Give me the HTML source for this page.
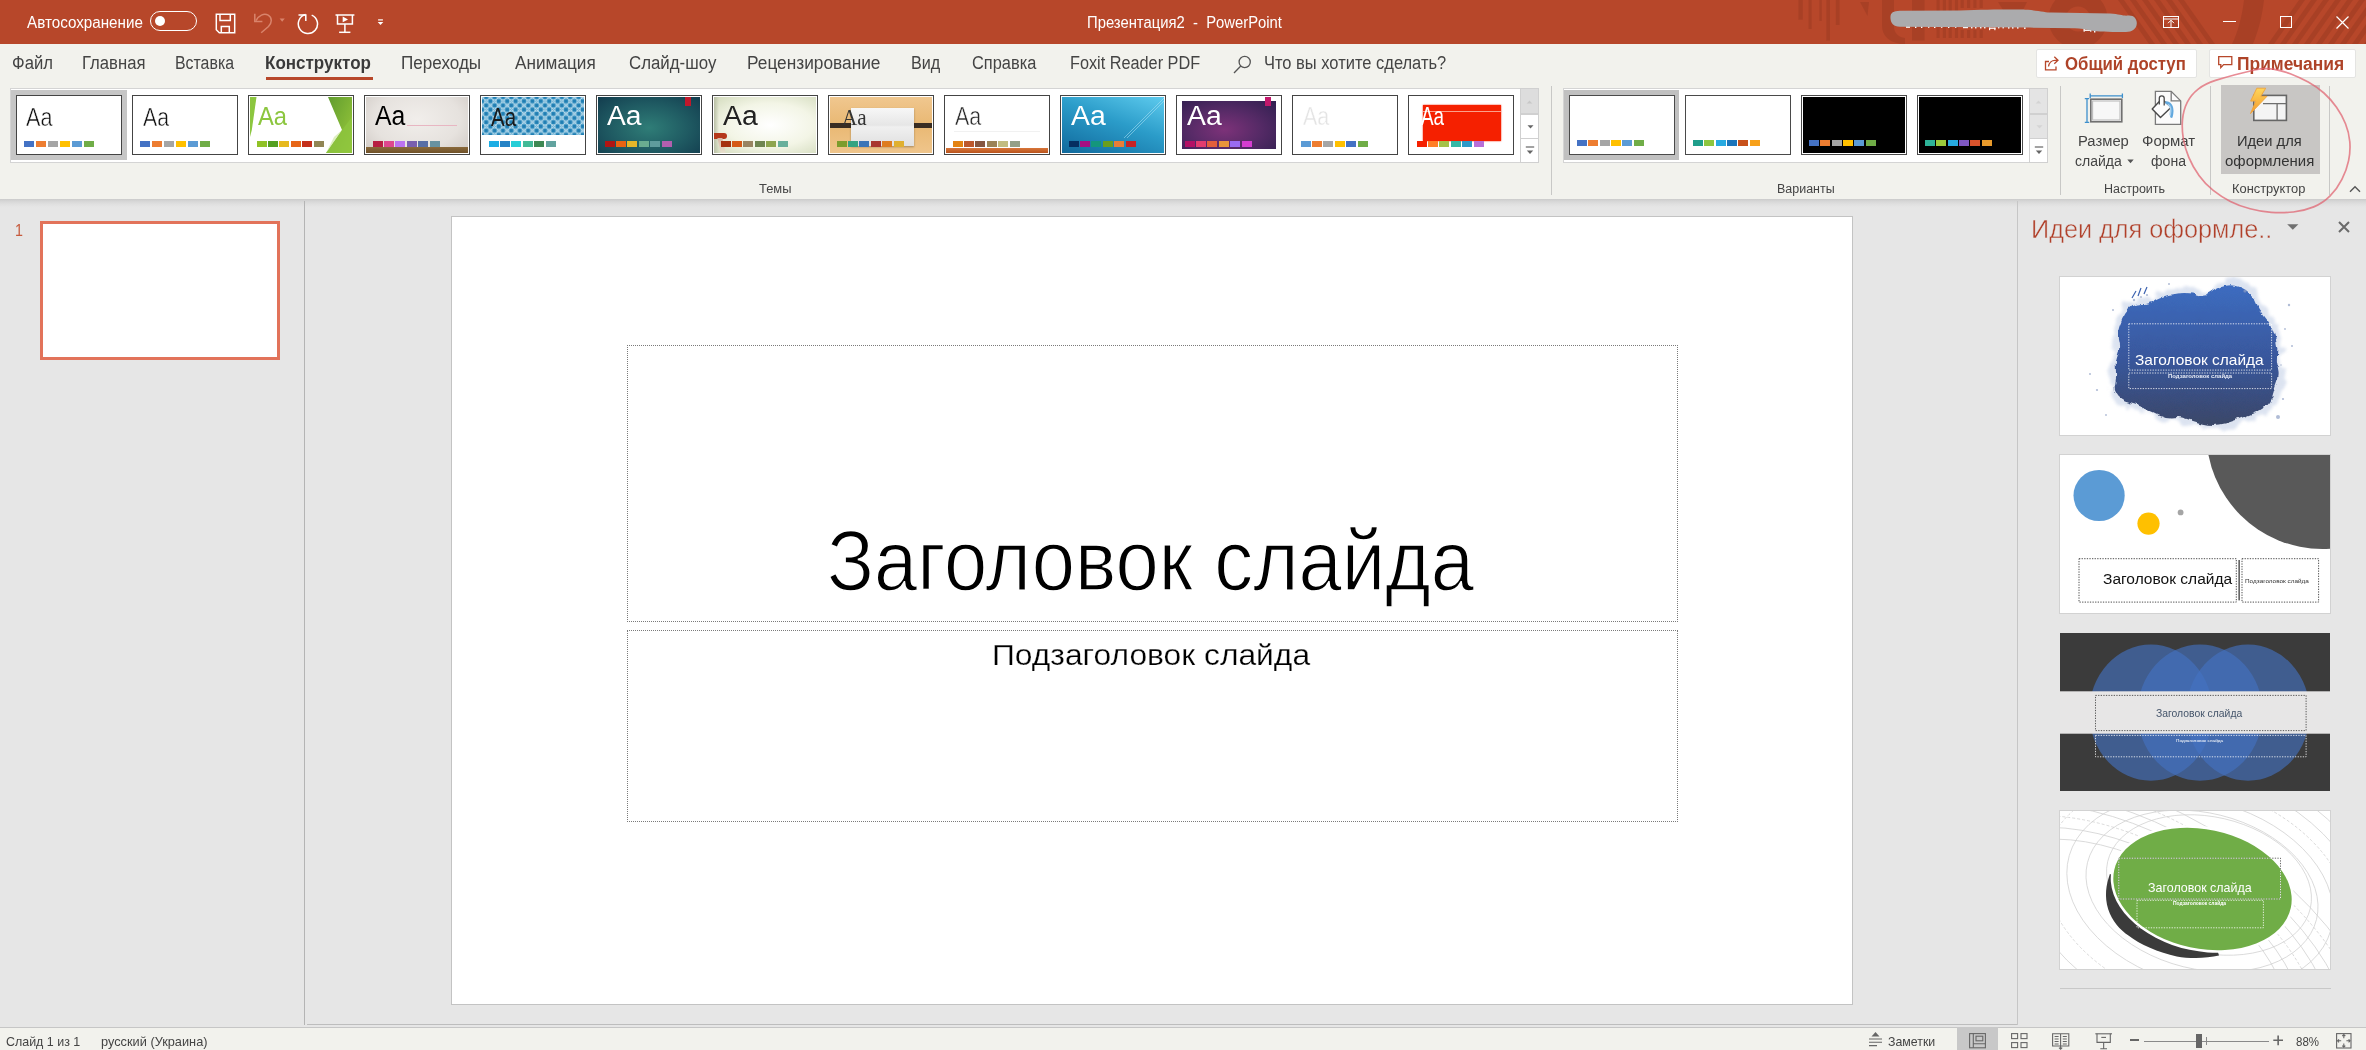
<!DOCTYPE html>
<html lang="ru"><head><meta charset="utf-8"><title>PowerPoint</title>
<style>
html,body{margin:0;padding:0;}
body{width:2366px;height:1050px;overflow:hidden;background:#E6E6E6;font-family:"Liberation Sans",sans-serif;position:relative;}
div,svg{box-sizing:border-box;}

</style></head><body>
<div style="position:absolute;left:0px;top:0px;width:2366px;height:44px;background:#B7472A;"></div>
<div style="position:absolute;left:0px;top:44px;width:2366px;height:155px;background:#F2F2ED;"></div>
<div style="position:absolute;left:0px;top:199px;width:2366px;height:9px;background:linear-gradient(to bottom,#cbcbcb 0%,#d6d6d6 25%,#dfdfdf 55%,#e4e4e4 80%,#e6e6e6 100%);"></div>
<div style="position:absolute;left:0px;top:1027px;width:2366px;height:23px;background:#F2F2ED;border-top:1px solid #c6c6c6;"></div>
<svg style="position:absolute;left:0px;top:0px;" width="2366" height="44" viewBox="0 0 2366 44"><g fill="#A53F25" opacity="0.8"><rect x="1798.4" y="0" width="4.4" height="19.7"/><rect x="1808.5" y="0" width="3.2" height="29"/><rect x="1819.3" y="0" width="2.5" height="21"/><rect x="1826.3" y="0" width="3.7" height="40.6"/><rect x="1835.8" y="0" width="3.8" height="25"/><path d="M1860 2 H1869 L1867.5 16 Z"/><path d="M1882 0 H1894 V26 C1894 33 1898 37 1905 38 L1905 44 C1890 44 1882 36 1882 26 Z"/><rect x="1912" y="0" width="12.6" height="40.6"/><rect x="1936.5" y="0" width="3.2" height="38"/><rect x="1942.8" y="0" width="3.2" height="38"/><rect x="1948.6" y="0" width="3.2" height="38"/><rect x="1954.9" y="0" width="3.2" height="38"/><rect x="1960.6" y="0" width="3.2" height="8"/><rect x="1960.6" y="30" width="3.2" height="8"/><rect x="1967" y="0" width="3.2" height="8"/><rect x="1967" y="30" width="3.2" height="8"/><rect x="1973.3" y="0" width="3.2" height="8"/><rect x="1973.3" y="30" width="3.2" height="8"/><rect x="1979.6" y="0" width="3.2" height="8"/><rect x="1979.6" y="30" width="3.2" height="8"/><path d="M1998 2 H2027 L2023 10 H2003 Z"/><circle cx="2078" cy="19" r="21" fill="none" stroke="#A53F25" stroke-width="17"/><path d="M2118 0 h6 l31 44 h-6 z"/><path d="M2130 0 h6 l31 44 h-6 z"/><path d="M2142 0 h6 l31 44 h-6 z"/><path d="M2154 0 h6 l31 44 h-6 z"/><path d="M2166 0 h6 l31 44 h-6 z"/><path d="M2178 0 h6 l31 44 h-6 z"/><path d="M2244 0 H2264 C2262 18 2258 32 2253 44 H2232 C2238 32 2242 16 2244 0 Z"/><path d="M2268 44 h6 l31 -44 h-6 z"/><path d="M2280 44 h6 l31 -44 h-6 z"/><path d="M2292 44 h6 l31 -44 h-6 z"/><path d="M2304 44 h6 l31 -44 h-6 z"/><path d="M2316 44 h6 l31 -44 h-6 z"/><path d="M2328 44 h6 l31 -44 h-6 z"/><path d="M2340 44 h6 l31 -44 h-6 z"/><path d="M2352 44 h6 l31 -44 h-6 z"/><path d="M2364 44 h6 l31 -44 h-6 z"/><path d="M2376 44 h6 l31 -44 h-6 z"/></g></svg>
<div style="position:absolute;left:27.00px;top:11.50px;white-space:pre;font:400 16px/21px 'Liberation Sans',sans-serif;color:#fff;transform:scaleX(0.9503);transform-origin:0 0;">Автосохранение</div>
<div style="position:absolute;left:150px;top:11px;width:47px;height:20px;border:1.5px solid #fff;border-radius:10px;"></div>
<div style="position:absolute;left:155px;top:16px;width:10px;height:10px;background:#fff;border-radius:5px;"></div>
<svg style="position:absolute;left:215px;top:13px;" width="21" height="21" viewBox="0 0 21 21"><g fill="none" stroke="#fff" stroke-width="1.5"><path d="M1.3 1.3 H19.7 V19.7 H4.3 L1.3 16.7 Z"/><path d="M5 1.3 V7.6 H15.3 V1.3"/><path d="M6.3 19.7 V13.4 H14.3 V19.7"/></g></svg>
<svg style="position:absolute;left:252px;top:12px;" width="34" height="24" viewBox="0 0 34 24"><g fill="none" stroke="#D9846C" stroke-width="1.5"><path d="M2.8 1.8 V9.5 H10.4"/><path d="M4 8.6 C6.5 3.5 12 0.8 16.2 3.2 C20.5 5.8 20 11 16.5 14.5 L9.2 20.8"/></g><path d="M27.6 6.6 h5.2 l-2.6 3.1z" fill="#D9846C"/></svg>
<svg style="position:absolute;left:297px;top:13px;" width="22" height="22" viewBox="0 0 22 22"><g fill="none" stroke="#fff" stroke-width="1.5"><path d="M14.7 2.1 A9.6 9.6 0 1 1 8.6 1.6"/><path d="M1.5 1.9 H8.8 V8"/></g></svg>
<svg style="position:absolute;left:335px;top:14px;" width="20" height="20" viewBox="0 0 20 20"><g fill="none" stroke="#fff" stroke-width="1.5"><path d="M0.5 1 H19.4"/><path d="M2.5 1 V9.9 H17.4 V1"/><path d="M9.9 9.9 V18.3"/><path d="M4.1 18.3 H15.4"/></g><path d="M7.7 2.6 L13 5.5 L7.7 8.3Z" fill="#fff"/></svg>
<svg style="position:absolute;left:377px;top:18px;" width="8" height="9" viewBox="0 0 8 9"><path d="M1.1 1.9 H5.9" stroke="#fff" stroke-width="1.2"/><path d="M0.7 3.9 H6.3 L3.5 6.9Z" fill="#fff"/></svg>
<div style="position:absolute;left:1086.57px;top:11.50px;white-space:pre;font:400 16px/21px 'Liberation Sans',sans-serif;color:#fff;transform:scaleX(0.9261);transform-origin:0 0;">Презентация2  -  PowerPoint</div>
<svg style="position:absolute;left:0px;top:0px;" width="2366" height="44" viewBox="0 0 2366 44"><g fill="#fff"><rect x="1906" y="26" width="4" height="1.8"/><rect x="1915" y="26" width="1.4" height="2"/><rect x="1921" y="26" width="1.4" height="2"/><rect x="1928" y="26" width="1.4" height="1.8"/><rect x="1934" y="26" width="1.4" height="2"/><rect x="1941" y="26" width="1.4" height="1.8"/><rect x="1948" y="26" width="1.4" height="2"/><rect x="1955" y="26" width="1.4" height="1.8"/><rect x="1963" y="26" width="5" height="2.2"/><rect x="1971" y="26" width="1.5" height="2.4"/><rect x="1975" y="26" width="1.5" height="2.4"/><rect x="1980" y="26" width="1.5" height="2.4"/><rect x="1984" y="26" width="1.5" height="2.4"/><rect x="1989" y="27.6" width="6.5" height="1.2"/><rect x="1989" y="27.6" width="1.2" height="2.6"/><rect x="1994.3" y="27.6" width="1.2" height="2.6"/><rect x="1998" y="26" width="1.4" height="2.4"/><rect x="2002.5" y="26" width="1.4" height="2.4"/><rect x="2008" y="26" width="1.5" height="2.6"/><rect x="2012" y="26" width="1.5" height="2.6"/><rect x="2017" y="26" width="1.5" height="2.6"/><rect x="2024" y="27.3" width="1.6" height="1.6"/><rect x="2083.5" y="27" width="1.4" height="4.6"/><rect x="2085" y="29.6" width="6" height="1.3"/><rect x="2090" y="27" width="1.4" height="4.6"/><rect x="2094" y="29.5" width="1.4" height="3"/></g><path d="M1890.5 18.5 C1890 13 1893 11 1900 10.8 L1960 10.5 C1990 9.4 2020 9.4 2028 9.8 C2040 10.8 2046 12.6 2052 12.6 L2110 13.5 C2120 14 2123 16.2 2128 15.6 C2134 15 2137 19 2136.8 23.5 C2136.5 29 2132 32 2126 32 C2115 32 2100 31.8 2094 31 C2086 29.5 2080 28.5 2075 28.3 L2030 27.6 L1900 26.8 C1893 26.5 1891 23 1890.5 18.5 Z" fill="#ABABAD"/></svg>
<svg style="position:absolute;left:2163px;top:16px;" width="16" height="12" viewBox="0 0 16 12"><g fill="none" stroke="#fff" stroke-width="1"><rect x="0.5" y="0.5" width="15" height="11"/><path d="M0.5 3 H15.5"/><path d="M8 11 V4.4 M5 7.2 L8 4.2 L11 7.2"/></g></svg>
<div style="position:absolute;left:2223px;top:20.7px;width:12.5px;height:1.2px;background:#fff;"></div>
<div style="position:absolute;left:2280px;top:16px;width:12px;height:12px;border:1.2px solid #fff;"></div>
<svg style="position:absolute;left:2336px;top:16px;" width="13" height="13" viewBox="0 0 13 13"><path d="M0.5 0.5 L12.5 12.5 M12.5 0.5 L0.5 12.5" stroke="#fff" stroke-width="1.2" fill="none"/></svg>
<div style="position:absolute;left:12.08px;top:51.30px;white-space:pre;font:400 18px/24px 'Liberation Sans',sans-serif;color:#444444;transform:scaleX(0.9240);transform-origin:0 0;">Файл</div>
<div style="position:absolute;left:81.57px;top:51.30px;white-space:pre;font:400 18px/24px 'Liberation Sans',sans-serif;color:#444444;transform:scaleX(0.9257);transform-origin:0 0;">Главная</div>
<div style="position:absolute;left:175.42px;top:51.30px;white-space:pre;font:400 18px/24px 'Liberation Sans',sans-serif;color:#444444;transform:scaleX(0.8820);transform-origin:0 0;">Вставка</div>
<div style="position:absolute;left:401.05px;top:51.30px;white-space:pre;font:400 18px/24px 'Liberation Sans',sans-serif;color:#444444;transform:scaleX(0.9492);transform-origin:0 0;">Переходы</div>
<div style="position:absolute;left:515.00px;top:51.30px;white-space:pre;font:400 18px/24px 'Liberation Sans',sans-serif;color:#444444;transform:scaleX(0.9552);transform-origin:0 0;">Анимация</div>
<div style="position:absolute;left:629.00px;top:51.30px;white-space:pre;font:400 18px/24px 'Liberation Sans',sans-serif;color:#444444;transform:scaleX(0.9356);transform-origin:0 0;">Слайд-шоу</div>
<div style="position:absolute;left:747.04px;top:51.30px;white-space:pre;font:400 18px/24px 'Liberation Sans',sans-serif;color:#444444;transform:scaleX(0.9603);transform-origin:0 0;">Рецензирование</div>
<div style="position:absolute;left:911.10px;top:51.30px;white-space:pre;font:400 18px/24px 'Liberation Sans',sans-serif;color:#444444;transform:scaleX(0.8983);transform-origin:0 0;">Вид</div>
<div style="position:absolute;left:971.80px;top:51.30px;white-space:pre;font:400 18px/24px 'Liberation Sans',sans-serif;color:#444444;transform:scaleX(0.9106);transform-origin:0 0;">Справка</div>
<div style="position:absolute;left:1069.90px;top:51.30px;white-space:pre;font:400 18px/24px 'Liberation Sans',sans-serif;color:#444444;transform:scaleX(0.9032);transform-origin:0 0;">Foxit Reader PDF</div>
<div style="position:absolute;left:265.35px;top:51.30px;white-space:pre;font:700 18px/24px 'Liberation Sans',sans-serif;color:#3a3a3a;transform:scaleX(0.9457);transform-origin:0 0;">Конструктор</div>
<div style="position:absolute;left:265.8px;top:76.5px;width:106.8px;height:3px;background:#B7472A;"></div>
<svg style="position:absolute;left:1233px;top:55px;" width="19" height="19" viewBox="0 0 19 19"><g fill="none" stroke="#555" stroke-width="1.3"><circle cx="11.7" cy="7" r="5.6"/><path d="M7.8 11 L1 18"/></g></svg>
<div style="position:absolute;left:1263.58px;top:51.30px;white-space:pre;font:400 18px/24px 'Liberation Sans',sans-serif;color:#444444;transform:scaleX(0.9158);transform-origin:0 0;">Что вы хотите сделать?</div>
<div style="position:absolute;left:2036px;top:48.5px;width:161px;height:29px;background:#fff;border:1px solid #e4e4e2;border-radius:2px;"></div>
<div style="position:absolute;left:2208.5px;top:48.5px;width:147px;height:29px;background:#fff;border:1px solid #e4e4e2;border-radius:2px;"></div>
<svg style="position:absolute;left:2044px;top:55px;" width="16" height="16" viewBox="0 0 16 16"><g fill="none" stroke="#B7472A" stroke-width="1.3"><path d="M5 6.5 H1.5 V14.8 H12 V11.5"/><path d="M4.5 11.5 C5 7.5 8 5.3 11 5.3 H13.5 M10.3 1.8 L14 5.3 L10.3 8.8"/></g></svg>
<div style="position:absolute;left:2065.30px;top:51.60px;white-space:pre;font:700 18px/24px 'Liberation Sans',sans-serif;color:#AE4328;transform:scaleX(0.9309);transform-origin:0 0;">Общий доступ</div>
<svg style="position:absolute;left:2218px;top:55.5px;" width="15" height="13" viewBox="0 0 15 13"><path d="M0.7 0.7 H13.8 V8.6 H5.6 L2.8 11.6 V8.6 H0.7 Z" fill="none" stroke="#B7472A" stroke-width="1.3"/></svg>
<div style="position:absolute;left:2237.33px;top:51.60px;white-space:pre;font:700 18px/24px 'Liberation Sans',sans-serif;color:#AE4328;transform:scaleX(0.9673);transform-origin:0 0;">Примечания</div>
<div style="position:absolute;left:10px;top:88px;width:1528.5px;height:74.5px;background:#fff;border:1px solid #d4d4d4;"></div>
<div style="position:absolute;left:11.3px;top:90px;width:115.5px;height:69.5px;background:#c6c6c6;"></div>
<div style="position:absolute;left:16px;top:95px;width:106px;height:60px;border:1px solid #444;background:#fff;overflow:hidden;"><div style="position:absolute;left:1px;top:1px;width:102px;height:56px;overflow:hidden;"><div style="position:absolute;left:6.0px;top:43.5px;width:10px;height:6px;background:#4472C4"></div><div style="position:absolute;left:18.0px;top:43.5px;width:10px;height:6px;background:#ED7D31"></div><div style="position:absolute;left:30.0px;top:43.5px;width:10px;height:6px;background:#A5A5A5"></div><div style="position:absolute;left:42.0px;top:43.5px;width:10px;height:6px;background:#FFC000"></div><div style="position:absolute;left:54.0px;top:43.5px;width:10px;height:6px;background:#5B9BD5"></div><div style="position:absolute;left:66.0px;top:43.5px;width:10px;height:6px;background:#70AD47"></div></div></div>
<div style="position:absolute;left:132px;top:95px;width:106px;height:60px;border:1px solid #444;background:#fff;overflow:hidden;"><div style="position:absolute;left:1px;top:1px;width:102px;height:56px;overflow:hidden;"><div style="position:absolute;left:6.0px;top:43.5px;width:10px;height:6px;background:#4472C4"></div><div style="position:absolute;left:18.0px;top:43.5px;width:10px;height:6px;background:#ED7D31"></div><div style="position:absolute;left:30.0px;top:43.5px;width:10px;height:6px;background:#A5A5A5"></div><div style="position:absolute;left:42.0px;top:43.5px;width:10px;height:6px;background:#FFC000"></div><div style="position:absolute;left:54.0px;top:43.5px;width:10px;height:6px;background:#5B9BD5"></div><div style="position:absolute;left:66.0px;top:43.5px;width:10px;height:6px;background:#70AD47"></div></div></div>
<div style="position:absolute;left:248px;top:95px;width:106px;height:60px;border:1px solid #444;background:#fff;overflow:hidden;"><div style="position:absolute;left:1px;top:1px;width:102px;height:56px;overflow:hidden;"><svg style="position:absolute;left:0;top:0" width="102" height="56"><defs><linearGradient id="fg" x1="0" y1="0" x2="1" y2="1"><stop offset="0" stop-color="#5E9A2E"/><stop offset="1" stop-color="#9CCB3B"/></linearGradient></defs><path d="M0 0 H6.5 L1.8 33 L0 40Z" fill="#8CC63F"/><path d="M78 0 H102 V56 H76 L92 33Z" fill="url(#fg)"/><path d="M92 33 L102 20 V56 H76Z" fill="#8DC63F" opacity="0.75"/><path d="M84 40 L92 33 L76 56Z" fill="#D6EBB0" opacity="0.8"/></svg><div style="position:absolute;left:6.5px;top:43.5px;width:10px;height:6px;background:#90C226"></div><div style="position:absolute;left:17.9px;top:43.5px;width:10px;height:6px;background:#54A021"></div><div style="position:absolute;left:29.3px;top:43.5px;width:10px;height:6px;background:#E6B91E"></div><div style="position:absolute;left:40.7px;top:43.5px;width:10px;height:6px;background:#E76618"></div><div style="position:absolute;left:52.1px;top:43.5px;width:10px;height:6px;background:#C42F1A"></div><div style="position:absolute;left:63.5px;top:43.5px;width:10px;height:6px;background:#918655"></div></div></div>
<div style="position:absolute;left:364px;top:95px;width:106px;height:60px;border:1px solid #444;background:#fff;overflow:hidden;"><div style="position:absolute;left:1px;top:1px;width:102px;height:56px;overflow:hidden;"><div style="position:absolute;left:0;top:0;width:102px;height:56px;background:radial-gradient(ellipse at 50% 40%,#f1eeeb 0%,#e6e2de 60%,#cfc9c4 100%)"></div><div style="position:absolute;left:0;top:50px;width:102px;height:6px;background:linear-gradient(#8a6a3c,#6f5128)"></div><div style="position:absolute;left:41px;top:27.7px;width:50px;height:1px;background:#e8b6c2"></div><div style="position:absolute;left:6.5px;top:43.5px;width:10px;height:6px;background:#B71E42"></div><div style="position:absolute;left:17.9px;top:43.5px;width:10px;height:6px;background:#DE478E"></div><div style="position:absolute;left:29.3px;top:43.5px;width:10px;height:6px;background:#BC72F0"></div><div style="position:absolute;left:40.7px;top:43.5px;width:10px;height:6px;background:#795FAF"></div><div style="position:absolute;left:52.1px;top:43.5px;width:10px;height:6px;background:#586EA6"></div><div style="position:absolute;left:63.5px;top:43.5px;width:10px;height:6px;background:#6892A0"></div></div></div>
<div style="position:absolute;left:480px;top:95px;width:106px;height:60px;border:1px solid #444;background:#fff;overflow:hidden;"><div style="position:absolute;left:1px;top:1px;width:102px;height:56px;overflow:hidden;"><svg style="position:absolute;left:0;top:0" width="102" height="38"><defs><pattern id="ip" width="8.4" height="8.4" patternUnits="userSpaceOnUse"><rect width="8.4" height="8.4" fill="#2686BA"/><path d="M0 0 L8.4 8.4 M8.4 0 L0 8.4" stroke="#cfe8f3" stroke-width="1.15" opacity="0.8"/><g fill="none" stroke="#d8edf6" stroke-width="0.7" opacity="0.85"><circle cx="4.2" cy="4.2" r="1.9"/><circle cx="0" cy="0" r="1.9"/><circle cx="8.4" cy="0" r="1.9"/><circle cx="0" cy="8.4" r="1.9"/><circle cx="8.4" cy="8.4" r="1.9"/></g><g fill="#1F7DB2"><circle cx="4.2" cy="0" r="1.5"/><circle cx="4.2" cy="8.4" r="1.5"/><circle cx="0" cy="4.2" r="1.5"/><circle cx="8.4" cy="4.2" r="1.5"/></g></pattern></defs><rect width="102" height="38" fill="url(#ip)"/></svg><div style="position:absolute;left:6.5px;top:43.5px;width:10px;height:6px;background:#1CADE4"></div><div style="position:absolute;left:17.9px;top:43.5px;width:10px;height:6px;background:#2683C6"></div><div style="position:absolute;left:29.3px;top:43.5px;width:10px;height:6px;background:#27CED7"></div><div style="position:absolute;left:40.7px;top:43.5px;width:10px;height:6px;background:#42BA97"></div><div style="position:absolute;left:52.1px;top:43.5px;width:10px;height:6px;background:#3E8853"></div><div style="position:absolute;left:63.5px;top:43.5px;width:10px;height:6px;background:#62A39F"></div></div></div>
<div style="position:absolute;left:596px;top:95px;width:106px;height:60px;border:1px solid #444;background:#fff;overflow:hidden;"><div style="position:absolute;left:1px;top:1px;width:102px;height:56px;overflow:hidden;"><div style="position:absolute;left:0;top:0;width:102px;height:56px;background:radial-gradient(ellipse at 50% 55%,#2f7d77 0%,#1f5a62 55%,#123c4e 100%)"></div><div style="position:absolute;left:87px;top:0;width:6px;height:9px;background:#C0182B"></div><div style="position:absolute;left:6.5px;top:43.5px;width:10px;height:6px;background:#B01513"></div><div style="position:absolute;left:17.9px;top:43.5px;width:10px;height:6px;background:#EA6312"></div><div style="position:absolute;left:29.3px;top:43.5px;width:10px;height:6px;background:#E6B729"></div><div style="position:absolute;left:40.7px;top:43.5px;width:10px;height:6px;background:#6AAC90"></div><div style="position:absolute;left:52.1px;top:43.5px;width:10px;height:6px;background:#5F9C9D"></div><div style="position:absolute;left:63.5px;top:43.5px;width:10px;height:6px;background:#B25FAE"></div></div></div>
<div style="position:absolute;left:712px;top:95px;width:106px;height:60px;border:1px solid #444;background:#fff;overflow:hidden;"><div style="position:absolute;left:1px;top:1px;width:102px;height:56px;overflow:hidden;"><div style="position:absolute;left:0;top:0;width:102px;height:56px;background:radial-gradient(ellipse at 55% 50%,#ffffff 0%,#f3f5e6 55%,#d3dbbd 100%)"></div><div style="position:absolute;left:0;top:0;width:5px;height:56px;background:linear-gradient(to right,#b9bfa6,rgba(230,233,215,0))"></div><div style="position:absolute;left:0;top:35.5px;width:13px;height:6px;background:#B5381B;border-radius:0 3px 3px 0"></div><div style="position:absolute;left:5px;top:41px;width:5px;height:15px;background:linear-gradient(#d9b7a6,#e7e0cd);transform:skewX(12deg)"></div><div style="position:absolute;left:6.5px;top:43.5px;width:10px;height:6px;background:#A5300F"></div><div style="position:absolute;left:17.9px;top:43.5px;width:10px;height:6px;background:#D55816"></div><div style="position:absolute;left:29.3px;top:43.5px;width:10px;height:6px;background:#998462"></div><div style="position:absolute;left:40.7px;top:43.5px;width:10px;height:6px;background:#6F8552"></div><div style="position:absolute;left:52.1px;top:43.5px;width:10px;height:6px;background:#8EA550"></div><div style="position:absolute;left:63.5px;top:43.5px;width:10px;height:6px;background:#69B09C"></div></div></div>
<div style="position:absolute;left:828px;top:95px;width:106px;height:60px;border:1px solid #444;background:#fff;overflow:hidden;"><div style="position:absolute;left:1px;top:1px;width:102px;height:56px;overflow:hidden;"><div style="position:absolute;left:0;top:0;width:102px;height:56px;background:linear-gradient(#f0c78f,#e9b873 50%,#efc58b)"></div><div style="position:absolute;left:0;top:25.5px;width:102px;height:5px;background:#3a2d22"></div><div style="position:absolute;left:20.5px;top:11px;width:63px;height:38px;background:linear-gradient(#f7f7f7,#e6e6e6 45%,#f0f0f0 50%,#e0e0e0);box-shadow:0 1px 2px rgba(0,0,0,.3)"></div><div style="position:absolute;left:6.5px;top:43.5px;width:10px;height:6px;background:#7C9C2C"></div><div style="position:absolute;left:17.9px;top:43.5px;width:10px;height:6px;background:#34A381"></div><div style="position:absolute;left:29.3px;top:43.5px;width:10px;height:6px;background:#3A75B8"></div><div style="position:absolute;left:40.7px;top:43.5px;width:10px;height:6px;background:#A8352F"></div><div style="position:absolute;left:52.1px;top:43.5px;width:10px;height:6px;background:#DE7C1E"></div><div style="position:absolute;left:63.5px;top:43.5px;width:10px;height:6px;background:#E0B030"></div></div></div>
<div style="position:absolute;left:944px;top:95px;width:106px;height:60px;border:1px solid #444;background:#fff;overflow:hidden;"><div style="position:absolute;left:1px;top:1px;width:102px;height:56px;overflow:hidden;"><div style="position:absolute;left:0;top:51px;width:102px;height:5px;background:linear-gradient(#d8763a,#b9531c)"></div><div style="position:absolute;left:8px;top:33.5px;width:86px;height:1px;background:#f1f1f1"></div><div style="position:absolute;left:6.5px;top:43.5px;width:10px;height:6px;background:#E48312"></div><div style="position:absolute;left:17.9px;top:43.5px;width:10px;height:6px;background:#BD582C"></div><div style="position:absolute;left:29.3px;top:43.5px;width:10px;height:6px;background:#865640"></div><div style="position:absolute;left:40.7px;top:43.5px;width:10px;height:6px;background:#9B8357"></div><div style="position:absolute;left:52.1px;top:43.5px;width:10px;height:6px;background:#C2BC80"></div><div style="position:absolute;left:63.5px;top:43.5px;width:10px;height:6px;background:#94A088"></div></div></div>
<div style="position:absolute;left:1060px;top:95px;width:106px;height:60px;border:1px solid #444;background:#fff;overflow:hidden;"><div style="position:absolute;left:1px;top:1px;width:102px;height:56px;overflow:hidden;"><div style="position:absolute;left:0;top:0;width:102px;height:56px;background:linear-gradient(200deg,#5ecbee 0%,#2b9cc9 45%,#10699c 100%)"></div><svg style="position:absolute;left:0;top:0" width="102" height="56"><path d="M62 41 L102 1 M65 41 L102 4" stroke="#a8e0f4" stroke-width="0.8" opacity="0.7"/></svg><div style="position:absolute;left:6.5px;top:43.5px;width:10px;height:6px;background:#052F61"></div><div style="position:absolute;left:17.9px;top:43.5px;width:10px;height:6px;background:#A50E82"></div><div style="position:absolute;left:29.3px;top:43.5px;width:10px;height:6px;background:#14967C"></div><div style="position:absolute;left:40.7px;top:43.5px;width:10px;height:6px;background:#6A9E1F"></div><div style="position:absolute;left:52.1px;top:43.5px;width:10px;height:6px;background:#E87D37"></div><div style="position:absolute;left:63.5px;top:43.5px;width:10px;height:6px;background:#C62324"></div></div></div>
<div style="position:absolute;left:1176px;top:95px;width:106px;height:60px;border:1px solid #444;background:#fff;overflow:hidden;"><div style="position:absolute;left:1px;top:1px;width:102px;height:56px;overflow:hidden;"><div style="position:absolute;left:4px;top:4px;width:94px;height:48px;background:radial-gradient(ellipse at 45% 60%,#7d3279 0%,#552a66 50%,#2f1f4f 100%)"></div><div style="position:absolute;left:87px;top:0;width:6px;height:9px;background:#C2186B"></div><div style="position:absolute;left:6.5px;top:43.5px;width:10px;height:6px;background:#B31166"></div><div style="position:absolute;left:17.9px;top:43.5px;width:10px;height:6px;background:#E33D6F"></div><div style="position:absolute;left:29.3px;top:43.5px;width:10px;height:6px;background:#E45F3C"></div><div style="position:absolute;left:40.7px;top:43.5px;width:10px;height:6px;background:#E9943A"></div><div style="position:absolute;left:52.1px;top:43.5px;width:10px;height:6px;background:#9B6BF2"></div><div style="position:absolute;left:63.5px;top:43.5px;width:10px;height:6px;background:#D53DD0"></div></div></div>
<div style="position:absolute;left:1292px;top:95px;width:106px;height:60px;border:1px solid #444;background:#fff;overflow:hidden;"><div style="position:absolute;left:1px;top:1px;width:102px;height:56px;overflow:hidden;"><div style="position:absolute;left:6.5px;top:43.5px;width:10px;height:6px;background:#5B9BD5"></div><div style="position:absolute;left:17.9px;top:43.5px;width:10px;height:6px;background:#ED7D31"></div><div style="position:absolute;left:29.3px;top:43.5px;width:10px;height:6px;background:#A5A5A5"></div><div style="position:absolute;left:40.7px;top:43.5px;width:10px;height:6px;background:#FFC000"></div><div style="position:absolute;left:52.1px;top:43.5px;width:10px;height:6px;background:#4472C4"></div><div style="position:absolute;left:63.5px;top:43.5px;width:10px;height:6px;background:#70AD47"></div></div></div>
<div style="position:absolute;left:1408px;top:95px;width:106px;height:60px;border:1px solid #444;background:#fff;overflow:hidden;"><div style="position:absolute;left:1px;top:1px;width:102px;height:56px;overflow:hidden;"><div style="position:absolute;left:12.5px;top:8px;width:78px;height:36px;background:#F52000;box-shadow:0 0 1.5px #F52000"></div><div style="position:absolute;left:12.5px;top:14px;width:78px;height:1px;background:#fba08a"></div><div style="position:absolute;left:6.5px;top:43.5px;width:10px;height:6px;background:#F52000"></div><div style="position:absolute;left:17.9px;top:43.5px;width:10px;height:6px;background:#FF7F27"></div><div style="position:absolute;left:29.3px;top:43.5px;width:10px;height:6px;background:#A5C249"></div><div style="position:absolute;left:40.7px;top:43.5px;width:10px;height:6px;background:#35B8A6"></div><div style="position:absolute;left:52.1px;top:43.5px;width:10px;height:6px;background:#2D9AC8"></div><div style="position:absolute;left:63.5px;top:43.5px;width:10px;height:6px;background:#B86FD8"></div></div></div>
<div style="position:absolute;left:26.25px;top:99.75px;white-space:pre;font:400 25.8px/34px 'Liberation Sans',sans-serif;color:#111;transform:scaleX(0.8383);transform-origin:0 0;-webkit-text-stroke:0.5px #fff;">Aa</div>
<div style="position:absolute;left:142.50px;top:99.75px;white-space:pre;font:400 25.8px/34px 'Liberation Sans',sans-serif;color:#111;transform:scaleX(0.8228);transform-origin:0 0;-webkit-text-stroke:0.5px #fff;">Aa</div>
<div style="position:absolute;left:258.00px;top:99.30px;white-space:pre;font:400 26px/34px 'Liberation Sans',sans-serif;color:#8CC63F;transform:scaleX(0.9121);transform-origin:0 0;">Aa</div>
<div style="position:absolute;left:375.40px;top:98.30px;white-space:pre;font:400 27px/36px 'Liberation Sans',sans-serif;color:#000;transform:scaleX(0.9174);transform-origin:0 0;">Aa</div>
<div style="position:absolute;left:491.10px;top:100.60px;white-space:pre;font:400 25px/33px 'Liberation Sans',sans-serif;color:#1a1a1a;transform:scaleX(0.8183);transform-origin:0 0;">Aa</div>
<div style="position:absolute;left:607.00px;top:98.30px;white-space:pre;font:400 27px/36px 'Liberation Sans',sans-serif;color:#fff;transform:scaleX(1.0438);transform-origin:0 0;">Aa</div>
<div style="position:absolute;left:722.70px;top:98.30px;white-space:pre;font:400 27px/36px 'Liberation Sans',sans-serif;color:#222;transform:scaleX(1.0497);transform-origin:0 0;">Aa</div>
<div style="position:absolute;left:842.00px;top:102.30px;white-space:pre;font:400 23.5px/31px 'Liberation Serif',sans-serif;color:#333;transform:scaleX(0.9009);transform-origin:0 0;">Aa</div>
<div style="position:absolute;left:954.60px;top:100.30px;white-space:pre;font:400 25px/33px 'Liberation Sans',sans-serif;color:#2a2a2a;transform:scaleX(0.8574);transform-origin:0 0;-webkit-text-stroke:0.5px #fff;">Aa</div>
<div style="position:absolute;left:1070.70px;top:98.30px;white-space:pre;font:400 27px/36px 'Liberation Sans',sans-serif;color:#fff;transform:scaleX(1.0497);transform-origin:0 0;">Aa</div>
<div style="position:absolute;left:1186.80px;top:98.30px;white-space:pre;font:400 27px/36px 'Liberation Sans',sans-serif;color:#fff;transform:scaleX(1.0497);transform-origin:0 0;">Aa</div>
<div style="position:absolute;left:1302.60px;top:100.30px;white-space:pre;font:400 25px/33px 'Liberation Sans',sans-serif;color:#e4e4e4;transform:scaleX(0.8574);transform-origin:0 0;-webkit-text-stroke:0.4px #fff;">Aa</div>
<div style="position:absolute;left:1421.00px;top:100.30px;white-space:pre;font:400 25px/33px 'Liberation Sans',sans-serif;color:#fff;transform:scaleX(0.7563);transform-origin:0 0;">Aa</div>
<div style="position:absolute;left:1520px;top:88px;width:18.5px;height:74.5px;background:#fff;border:1px solid #d0d0d0;"></div>
<div style="position:absolute;left:1520px;top:88px;width:18.5px;height:26px;background:#dddddd;border:1px solid #d0d0d0;"></div>
<div style="position:absolute;left:1520px;top:113.5px;width:18.5px;height:25px;border:1px solid #d0d0d0;"></div>
<svg style="position:absolute;left:1525px;top:98.5px;" width="9" height="6" viewBox="0 0 9 6"><path d="M1.7 4.4 L4.5 1.4 L7.3 4.4Z" fill="#c8c8c8"/></svg>
<svg style="position:absolute;left:1525.5px;top:123.5px;" width="9" height="6" viewBox="0 0 9 6"><path d="M1.5 1.2 H7.5 L4.5 4.6Z" fill="#666"/></svg>
<svg style="position:absolute;left:1524.8px;top:145px;" width="10" height="13" viewBox="0 0 10 13"><path d="M0.8 2 H9.2" stroke="#666" stroke-width="1.2"/><path d="M1.8 5.4 H8.2 L5 9Z" fill="#666"/></svg>
<div style="position:absolute;left:759.00px;top:181.40px;white-space:pre;font:400 12px/16px 'Liberation Sans',sans-serif;color:#444444;transform:scaleX(1.0750);transform-origin:0 0;">Темы</div>
<div style="position:absolute;left:1551px;top:86px;width:1px;height:109px;background:#c8c8c6;"></div>
<div style="position:absolute;left:2060px;top:86px;width:1px;height:109px;background:#c8c8c6;"></div>
<div style="position:absolute;left:2210px;top:86px;width:1px;height:109px;background:#c8c8c6;"></div>
<div style="position:absolute;left:2329px;top:86px;width:1px;height:109px;background:#c8c8c6;"></div>
<div style="position:absolute;left:1562.5px;top:88px;width:485px;height:74.5px;background:#fff;border:1px solid #d4d4d4;"></div>
<div style="position:absolute;left:1563.7px;top:90px;width:115.5px;height:69.5px;background:#c0c0c0;"></div>
<div style="position:absolute;left:1568.5px;top:95px;width:106px;height:60px;border:1px solid #4a4a4a;background:#fff;"><div style="position:absolute;left:1px;top:1px;width:102px;height:56px;background:#fff;"><div style="position:absolute;left:6.5px;top:43px;width:10px;height:6px;background:#4472C4"></div><div style="position:absolute;left:17.8px;top:43px;width:10px;height:6px;background:#ED7D31"></div><div style="position:absolute;left:29.1px;top:43px;width:10px;height:6px;background:#A5A5A5"></div><div style="position:absolute;left:40.4px;top:43px;width:10px;height:6px;background:#FFC000"></div><div style="position:absolute;left:51.7px;top:43px;width:10px;height:6px;background:#5B9BD5"></div><div style="position:absolute;left:63.0px;top:43px;width:10px;height:6px;background:#70AD47"></div></div></div>
<div style="position:absolute;left:1684.5px;top:95px;width:106px;height:60px;border:1px solid #4a4a4a;background:#fff;"><div style="position:absolute;left:1px;top:1px;width:102px;height:56px;background:#fff;"><div style="position:absolute;left:6.5px;top:43px;width:10px;height:6px;background:#1F9E8B"></div><div style="position:absolute;left:17.8px;top:43px;width:10px;height:6px;background:#8DC63F"></div><div style="position:absolute;left:29.1px;top:43px;width:10px;height:6px;background:#27AAE1"></div><div style="position:absolute;left:40.4px;top:43px;width:10px;height:6px;background:#1B75BB"></div><div style="position:absolute;left:51.7px;top:43px;width:10px;height:6px;background:#C8511B"></div><div style="position:absolute;left:63.0px;top:43px;width:10px;height:6px;background:#F7A11A"></div></div></div>
<div style="position:absolute;left:1800.5px;top:95px;width:106px;height:60px;border:1px solid #4a4a4a;background:#fff;"><div style="position:absolute;left:1px;top:1px;width:102px;height:56px;background:#000;"><div style="position:absolute;left:6.5px;top:43px;width:10px;height:6px;background:#4472C4"></div><div style="position:absolute;left:17.8px;top:43px;width:10px;height:6px;background:#ED7D31"></div><div style="position:absolute;left:29.1px;top:43px;width:10px;height:6px;background:#A5A5A5"></div><div style="position:absolute;left:40.4px;top:43px;width:10px;height:6px;background:#FFC000"></div><div style="position:absolute;left:51.7px;top:43px;width:10px;height:6px;background:#5B9BD5"></div><div style="position:absolute;left:63.0px;top:43px;width:10px;height:6px;background:#70AD47"></div></div></div>
<div style="position:absolute;left:1916.5px;top:95px;width:106px;height:60px;border:1px solid #4a4a4a;background:#fff;"><div style="position:absolute;left:1px;top:1px;width:102px;height:56px;background:#000;"><div style="position:absolute;left:6.5px;top:43px;width:10px;height:6px;background:#2EB398"></div><div style="position:absolute;left:17.8px;top:43px;width:10px;height:6px;background:#9ACA3C"></div><div style="position:absolute;left:29.1px;top:43px;width:10px;height:6px;background:#27AAE1"></div><div style="position:absolute;left:40.4px;top:43px;width:10px;height:6px;background:#7E57C2"></div><div style="position:absolute;left:51.7px;top:43px;width:10px;height:6px;background:#D9532C"></div><div style="position:absolute;left:63.0px;top:43px;width:10px;height:6px;background:#E89A2B"></div></div></div>
<div style="position:absolute;left:2029px;top:88px;width:18.5px;height:74.5px;background:#fff;border:1px solid #d0d0d0;"></div>
<div style="position:absolute;left:2029px;top:88px;width:18.5px;height:26px;background:#e4e4e4;border:1px solid #d0d0d0;"></div>
<div style="position:absolute;left:2029px;top:113.5px;width:18.5px;height:25px;background:#e4e4e4;border:1px solid #d0d0d0;"></div>
<svg style="position:absolute;left:2034px;top:98.5px;" width="9" height="6" viewBox="0 0 9 6"><path d="M1.7 4.4 L4.5 1.4 L7.3 4.4Z" fill="#d4d4d4"/></svg>
<svg style="position:absolute;left:2034.5px;top:123.5px;" width="9" height="6" viewBox="0 0 9 6"><path d="M1.5 1.2 H7.5 L4.5 4.6Z" fill="#d4d4d4"/></svg>
<svg style="position:absolute;left:2033.8px;top:145px;" width="10" height="13" viewBox="0 0 10 13"><path d="M0.8 2 H9.2" stroke="#666" stroke-width="1.2"/><path d="M1.8 5.4 H8.2 L5 9Z" fill="#666"/></svg>
<div style="position:absolute;left:1777.00px;top:181.40px;white-space:pre;font:400 12px/16px 'Liberation Sans',sans-serif;color:#444444;transform:scaleX(1.0392);transform-origin:0 0;">Варианты</div>
<svg style="position:absolute;left:2080px;top:88px;" width="48" height="40" viewBox="2080 88 48 40"><rect x="2090.8" y="99.2" width="31" height="22.6" fill="#f7f7f7" stroke="#707070" stroke-width="1.6"/><rect x="2092.6" y="101" width="27.4" height="19" fill="none" stroke="#bcbcbc" stroke-width="1.1"/><path d="M2090.2 95.8 H2122.4 M2090.2 93.6 V98 M2122.4 93.6 V98 M2087 98.6 V122.4 M2084.8 98.6 H2089.2 M2084.8 122.4 H2089.2" stroke="#3D8FCC" stroke-width="1.3" fill="none"/></svg>
<div style="position:absolute;left:2077.94px;top:132.00px;white-space:pre;font:400 14px/19px 'Liberation Sans',sans-serif;color:#444444;transform:scaleX(1.0564);transform-origin:0 0;">Размер</div>
<div style="position:absolute;left:2075.30px;top:151.60px;white-space:pre;font:400 14px/19px 'Liberation Sans',sans-serif;color:#444444;transform:scaleX(1.0012);transform-origin:0 0;">слайда</div>
<svg style="position:absolute;left:2126.5px;top:159px;" width="7" height="5" viewBox="0 0 7 5"><path d="M0.3 0.5 H6.7 L3.5 4.2Z" fill="#555"/></svg>
<svg style="position:absolute;left:2148px;top:86px;" width="40" height="42" viewBox="2148 86 40 42"><path d="M2155.4 91.4 H2171.2 L2180.7 100.9 V124.4 H2155.4 Z" fill="#fbfbfb" stroke="#7a7a7a" stroke-width="1.3"/><path d="M2171.2 91.4 V100.9 H2180.7" fill="none" stroke="#7a7a7a" stroke-width="1.3"/><path d="M2152.2 108.9 L2161.7 99 L2171.2 107.3 L2160.5 117.4 Z" fill="#fdfdfd" stroke="#484848" stroke-width="1.4" stroke-linejoin="round"/><path d="M2159.3 104.6 V98.2 C2159.3 95.2 2164.2 95.2 2164.2 98.2 V105.6" fill="#fdfdfd" stroke="#484848" stroke-width="1.3"/><path d="M2166.4 102.6 C2171 103.5 2173.6 107.5 2171.4 116.6" fill="none" stroke="#62A8DE" stroke-width="2.6" stroke-linecap="round"/><path d="M2168.2 104.6 C2170.6 106 2171.4 109 2170.2 114.6" fill="none" stroke="#A9D0EE" stroke-width="1.6" stroke-linecap="round"/></svg>
<div style="position:absolute;left:2142.00px;top:132.00px;white-space:pre;font:400 14px/19px 'Liberation Sans',sans-serif;color:#444444;transform:scaleX(1.0692);transform-origin:0 0;">Формат</div>
<div style="position:absolute;left:2150.80px;top:151.60px;white-space:pre;font:400 14px/19px 'Liberation Sans',sans-serif;color:#444444;transform:scaleX(1.0047);transform-origin:0 0;">фона</div>
<div style="position:absolute;left:2104.00px;top:181.40px;white-space:pre;font:400 12px/16px 'Liberation Sans',sans-serif;color:#444444;transform:scaleX(1.0414);transform-origin:0 0;">Настроить</div>
<div style="position:absolute;left:2220.8px;top:85px;width:98.8px;height:89.3px;background:#c8c6c4;"></div>
<svg style="position:absolute;left:2246px;top:84px;" width="46" height="42" viewBox="2246 84 46 42"><defs><linearGradient id="lg" x1="0" y1="0" x2="0" y2="1"><stop offset="0" stop-color="#FFD65A"/><stop offset="1" stop-color="#F39A2C"/></linearGradient></defs><rect x="2253.8" y="95.4" width="32.6" height="25" fill="#f4f4f4" stroke="#666" stroke-width="1.6"/><path d="M2263 103.6 H2286.4 M2277.1 103.6 V120.4" stroke="#6e6e6e" stroke-width="1.3" fill="none"/><path d="M2256.8 88.2 L2265.7 88.2 L2260.8 96.3 L2267 96.3 L2250.5 113.6 L2255.8 101.1 L2250.6 101.1 Z" fill="url(#lg)" stroke="#EFA33A" stroke-width="0.9" stroke-linejoin="round"/></svg>
<div style="position:absolute;left:2237.45px;top:132.00px;white-space:pre;font:400 14px/19px 'Liberation Sans',sans-serif;color:#333;transform:scaleX(1.0489);transform-origin:0 0;">Идеи для</div>
<div style="position:absolute;left:2225.30px;top:151.60px;white-space:pre;font:400 14px/19px 'Liberation Sans',sans-serif;color:#333;transform:scaleX(1.0686);transform-origin:0 0;">оформления</div>
<div style="position:absolute;left:2232.30px;top:181.40px;white-space:pre;font:400 12px/16px 'Liberation Sans',sans-serif;color:#444444;transform:scaleX(1.0721);transform-origin:0 0;">Конструктор</div>
<svg style="position:absolute;left:2349px;top:184.5px;" width="12" height="8" viewBox="0 0 12 8"><path d="M1 6.8 L6 1.8 L11 6.8" fill="none" stroke="#555" stroke-width="1.4"/></svg>
<svg style="position:absolute;left:0px;top:0px;z-index:50;pointer-events:none;" width="2366" height="230" viewBox="0 0 2366 230"><path d="M2273.4 69.2 Q2264.5 67.6 2254.6 70.0 Q2244.6 72.4 2235.1 74.8 Q2225.7 77.3 2215.5 80.4 Q2205.3 83.6 2198.2 89.1 Q2191.1 94.6 2187.2 102.4 Q2183.3 110.3 2182.5 119.7 Q2181.7 129.1 2183.3 138.6 Q2184.9 148.0 2188.8 157.4 Q2192.7 166.8 2199.0 175.4 Q2205.3 184.1 2213.2 190.4 Q2221.0 196.7 2230.4 201.4 Q2239.8 206.1 2250.1 208.8 Q2260.3 211.6 2271.3 212.4 Q2282.3 213.2 2293.3 212.0 Q2304.3 210.8 2313.7 206.9 Q2323.1 203.0 2330.1 195.9 Q2337.2 188.8 2341.9 179.4 Q2346.7 170.0 2348.6 160.6 Q2350.6 151.1 2349.8 141.7 Q2349.0 132.3 2345.5 123.7 Q2342.0 115.0 2336.5 107.2 Q2331.0 99.3 2323.9 93.0 Q2316.8 86.7 2308.2 82.0 Q2299.5 77.3 2290.9 74.0 Q2282.3 70.8 2273.4 69.2Z" fill="none" stroke="#DF5F6D" stroke-opacity="0.72" stroke-width="1.7"/></svg>
<div style="position:absolute;left:304px;top:201px;width:1px;height:824px;background:#b4b4b4;"></div>
<div style="position:absolute;left:307px;top:1024px;width:1711px;height:1px;background:#bdbdbd;"></div>
<div style="position:absolute;left:2017px;top:201px;width:1px;height:824px;background:#c6c6c6;"></div>
<div style="position:absolute;left:14.96px;top:218.80px;white-space:pre;font:400 17px/23px 'Liberation Sans',sans-serif;color:#C65A3D;transform:scaleX(0.8375);transform-origin:0 0;">1</div>
<div style="position:absolute;left:40px;top:221px;width:240px;height:139px;background:#fff;border:3px solid #E2735A;"></div>
<div style="position:absolute;left:451px;top:216px;width:1401.5px;height:789px;background:#fff;border:1px solid #c3c3c3;"></div>
<div style="position:absolute;left:627px;top:345px;width:1051px;height:276.5px;border:1px dotted #7a7a7a;"></div>
<div style="position:absolute;left:627px;top:630px;width:1051px;height:191.5px;border:1px dotted #7a7a7a;"></div>
<div style="position:absolute;left:826.57px;top:505.40px;white-space:pre;font:400 85px/111px 'Liberation Sans',sans-serif;color:#000;transform:scaleX(0.9151);transform-origin:0 0;-webkit-text-stroke:1.5px #fff;">Заголовок слайда</div>
<div style="position:absolute;left:991.58px;top:634.80px;white-space:pre;font:400 30px/39px 'Liberation Sans',sans-serif;color:#000;transform:scaleX(1.0594);transform-origin:0 0;-webkit-text-stroke:0.25px #fff;">Подзаголовок слайда</div>
<div style="position:absolute;left:2031.02px;top:212.30px;white-space:pre;font:400 25.5px/34px 'Liberation Sans',sans-serif;color:#B0402A;transform:scaleX(0.9901);transform-origin:0 0;-webkit-text-stroke:0.45px #e6e6e6;">Идеи для оформле..</div>
<svg style="position:absolute;left:2286.8px;top:224px;" width="12" height="6.5" viewBox="0 0 12 6.5"><path d="M0.2 0.3 H11.4 L5.8 5.8Z" fill="#707070"/></svg>
<svg style="position:absolute;left:2338.3px;top:221.2px;" width="12" height="12" viewBox="0 0 12 12"><path d="M1 1 L11 11 M11 1 L1 11" stroke="#6a6a6a" stroke-width="2" fill="none"/></svg>
<div style="position:absolute;left:2059.5px;top:988px;width:271px;height:1px;background:#c8c8c8;"></div>
<div style="position:absolute;left:2059px;top:276px;width:272px;height:160px;background:#fff;overflow:hidden;"><svg style="position:absolute;left:0.4px;top:0.5px" width="271" height="159"><defs><linearGradient id="bg1" x1="0" y1="0" x2="0" y2="1"><stop offset="0" stop-color="#3C6CC0"/><stop offset="0.55" stop-color="#39569A"/><stop offset="1" stop-color="#3A4768"/></linearGradient><filter id="bl1" x="-10%" y="-10%" width="120%" height="120%"><feTurbulence type="fractalNoise" baseFrequency="0.09" numOctaves="3" seed="4" result="n"/><feDisplacementMap in="SourceGraphic" in2="n" scale="12" xChannelSelector="R" yChannelSelector="G"/><feGaussianBlur stdDeviation="1.6"/></filter><filter id="rg1" x="-10%" y="-10%" width="120%" height="120%"><feTurbulence type="fractalNoise" baseFrequency="0.11" numOctaves="3" seed="7" result="n"/><feDisplacementMap in="SourceGraphic" in2="n" scale="5.5" xChannelSelector="R" yChannelSelector="G"/></filter></defs><path d="M73.2 29.2 Q76.6 27.1 83.5 27.1 Q90.4 27.1 95.5 23.7 Q100.7 20.2 109.2 18.1 Q117.8 15.9 126.4 15.9 Q134.9 15.9 140.1 18.1 Q145.2 20.2 150.4 16.4 Q155.5 12.5 162.4 9.9 Q169.2 7.4 176.1 8.7 Q183.0 9.9 189.0 14.7 Q195.0 19.4 197.5 26.2 Q200.1 33.1 205.2 39.1 Q210.4 45.1 213.0 51.1 Q215.5 57.1 217.2 64.0 Q219.0 70.8 218.1 77.7 Q217.2 84.5 219.0 91.4 Q220.7 98.3 218.1 105.1 Q215.5 112.0 213.8 118.8 Q212.1 125.7 206.1 130.0 Q200.1 134.3 193.2 136.8 Q186.4 139.4 177.8 142.8 Q169.2 146.3 160.7 147.5 Q152.1 148.8 143.5 146.7 Q134.9 144.5 128.1 142.0 Q121.2 139.4 114.4 140.3 Q107.5 141.1 100.7 137.7 Q93.8 134.3 85.2 130.8 Q76.6 127.4 69.8 125.7 Q62.9 124.0 58.6 119.7 Q54.4 115.4 56.1 107.7 Q57.8 100.0 56.9 92.2 Q56.1 84.5 58.6 77.7 Q61.2 70.8 59.5 64.0 Q57.8 57.1 60.4 49.4 Q62.9 41.7 66.4 36.5 Q69.8 31.4 73.2 29.2Z" fill="#a9bbdc" opacity="0.4" filter="url(#bl1)" transform="translate(135.5 79.5) scale(1.07) translate(-135.5 -79.5)"/><path d="M73.2 29.2 Q76.6 27.1 83.5 27.1 Q90.4 27.1 95.5 23.7 Q100.7 20.2 109.2 18.1 Q117.8 15.9 126.4 15.9 Q134.9 15.9 140.1 18.1 Q145.2 20.2 150.4 16.4 Q155.5 12.5 162.4 9.9 Q169.2 7.4 176.1 8.7 Q183.0 9.9 189.0 14.7 Q195.0 19.4 197.5 26.2 Q200.1 33.1 205.2 39.1 Q210.4 45.1 213.0 51.1 Q215.5 57.1 217.2 64.0 Q219.0 70.8 218.1 77.7 Q217.2 84.5 219.0 91.4 Q220.7 98.3 218.1 105.1 Q215.5 112.0 213.8 118.8 Q212.1 125.7 206.1 130.0 Q200.1 134.3 193.2 136.8 Q186.4 139.4 177.8 142.8 Q169.2 146.3 160.7 147.5 Q152.1 148.8 143.5 146.7 Q134.9 144.5 128.1 142.0 Q121.2 139.4 114.4 140.3 Q107.5 141.1 100.7 137.7 Q93.8 134.3 85.2 130.8 Q76.6 127.4 69.8 125.7 Q62.9 124.0 58.6 119.7 Q54.4 115.4 56.1 107.7 Q57.8 100.0 56.9 92.2 Q56.1 84.5 58.6 77.7 Q61.2 70.8 59.5 64.0 Q57.8 57.1 60.4 49.4 Q62.9 41.7 66.4 36.5 Q69.8 31.4 73.2 29.2Z" fill="url(#bg1)" filter="url(#rg1)"/><circle cx="75" cy="23" r="1.2" fill="#8fa0c4" opacity="0.7"/><circle cx="82" cy="20" r="0.9" fill="#8fa0c4" opacity="0.7"/><circle cx="88" cy="18" r="1.1" fill="#8fa0c4" opacity="0.7"/><circle cx="110" cy="7" r="1.0" fill="#8fa0c4" opacity="0.7"/><circle cx="54" cy="33" r="1.0" fill="#8fa0c4" opacity="0.7"/><circle cx="31" cy="97" r="1.0" fill="#8fa0c4" opacity="0.7"/><circle cx="38" cy="113" r="1.1" fill="#8fa0c4" opacity="0.7"/><circle cx="47" cy="138" r="0.9" fill="#8fa0c4" opacity="0.7"/><circle cx="230" cy="28" r="1.2" fill="#8fa0c4" opacity="0.7"/><circle cx="226" cy="52" r="0.9" fill="#8fa0c4" opacity="0.7"/><circle cx="233" cy="69" r="1.0" fill="#8fa0c4" opacity="0.7"/><circle cx="224" cy="122" r="1.1" fill="#8fa0c4" opacity="0.7"/><circle cx="219" cy="140" r="2.0" fill="#8fa0c4" opacity="0.7"/><circle cx="186" cy="14" r="1.6" fill="#8fa0c4" opacity="0.7"/><circle cx="222" cy="88" r="0.8" fill="#8fa0c4" opacity="0.7"/><path d="M73 21 L77 14 M79 19 L82 11 M85 17 L88 10" stroke="#3C62B0" stroke-width="1.2"/><rect x="69.8" y="46.8" width="142.8" height="46.3" fill="none" stroke="#fff" stroke-width="0.8" stroke-dasharray="1.3 1.3"/><rect x="69.8" y="96" width="142.8" height="15.6" fill="none" stroke="#fff" stroke-width="0.8" stroke-dasharray="1.3 1.3"/></svg></div>
<div style="position:absolute;left:2059px;top:276px;width:272px;height:160px;border:1px solid #d2d2d2;"></div>
<div style="position:absolute;left:2135.20px;top:349.50px;white-space:pre;font:400 15px/20px 'Liberation Sans',sans-serif;color:#fff;transform:scaleX(1.0317);transform-origin:0 0;">Заголовок слайда</div>
<div style="position:absolute;left:2167.80px;top:373.20px;white-space:pre;font:700 5.2px/7px 'Liberation Sans',sans-serif;color:#e8ecf5;transform:scaleX(1.1486);transform-origin:0 0;">Подзаголовок слайда</div>
<div style="position:absolute;left:2059px;top:454px;width:272px;height:160px;background:#fff;overflow:hidden;"><svg style="position:absolute;left:0.4px;top:0.5px" width="271" height="159"><circle cx="263.5" cy="-22.2" r="116.2" fill="#595959"/><circle cx="40.1" cy="40.5" r="25.6" fill="#5B9BD5"/><circle cx="89.5" cy="68.6" r="11.1" fill="#FFC000"/><circle cx="121.6" cy="57.4" r="2.9" fill="#A5A5A5"/><rect x="20" y="103.7" width="157.3" height="43.4" fill="none" stroke="#222" stroke-width="0.8" stroke-dasharray="1.3 1.3"/><rect x="183" y="103.7" width="76.6" height="43.4" fill="none" stroke="#222" stroke-width="0.8" stroke-dasharray="1.3 1.3"/><path d="M180.1 105 V145.4" stroke="#000" stroke-width="1"/></svg></div>
<div style="position:absolute;left:2059px;top:454px;width:272px;height:160px;border:1px solid #d2d2d2;"></div>
<div style="position:absolute;left:2103.40px;top:567.60px;white-space:pre;font:400 15.5px/21px 'Liberation Sans',sans-serif;color:#111;transform:scaleX(1.0016);transform-origin:0 0;">Заголовок слайда</div>
<div style="position:absolute;left:2244.90px;top:578.00px;white-space:pre;font:400 5.2px/7px 'Liberation Sans',sans-serif;color:#333;transform:scaleX(1.2300);transform-origin:0 0;">Подзаголовок слайда</div>
<div style="position:absolute;left:2060px;top:633px;width:270px;height:158px;background:#3B3B3B;overflow:hidden;"><svg style="position:absolute;left:-0.3px;top:-0.3px" width="271" height="159"><g fill="#4472C4" fill-opacity="0.62"><ellipse cx="90.9" cy="79.6" rx="61.7" ry="68.1"/><ellipse cx="188.1" cy="79.6" rx="61.7" ry="68.1"/><ellipse cx="140.1" cy="79.6" rx="62.5" ry="68.1"/></g><rect x="0" y="58.3" width="271" height="42.4" fill="#E7E6E6"/><rect x="35.5" y="62.4" width="210.6" height="35.2" fill="none" stroke="#333" stroke-width="0.8" stroke-dasharray="1.3 1.3"/><rect x="35.5" y="102.4" width="210.6" height="21.4" fill="none" stroke="#fff" stroke-width="0.8" stroke-dasharray="1.3 1.3"/></svg></div>
<div style="position:absolute;left:2156.30px;top:705.10px;white-space:pre;font:400 11.8px/16px 'Liberation Sans',sans-serif;color:#44546A;transform:scaleX(0.8787);transform-origin:0 0;">Заголовок слайда</div>
<div style="position:absolute;left:2175.70px;top:737.70px;white-space:pre;font:400 4.2px/6px 'Liberation Sans',sans-serif;color:#fff;transform:scaleX(1.1273);transform-origin:0 0;">Подзаголовок слайда</div>
<div style="position:absolute;left:2059px;top:810px;width:272px;height:160px;background:#fff;overflow:hidden;"><svg style="position:absolute;left:0.4px;top:0.5px" width="271" height="159"><g fill="none" stroke="#cfcfcf" stroke-width="0.7"><ellipse cx="143" cy="80" rx="118" ry="78" transform="rotate(14 143 80)"/><ellipse cx="141" cy="82" rx="136" ry="92" transform="rotate(16 141 82)"/><ellipse cx="138" cy="84" rx="156" ry="108" transform="rotate(18 138 84)" stroke-dasharray="3 2"/><ellipse cx="136" cy="86" rx="178" ry="124" transform="rotate(20 136 86)"/><ellipse cx="132" cy="88" rx="205" ry="142" transform="rotate(22 132 88)"/><ellipse cx="128" cy="90" rx="236" ry="164" transform="rotate(24 128 90)" stroke-dasharray="3 2"/><ellipse cx="124" cy="92" rx="270" ry="190" transform="rotate(26 124 92)"/><ellipse cx="150" cy="74" rx="104" ry="68" transform="rotate(13 150 74)"/><ellipse cx="120" cy="96" rx="310" ry="220" transform="rotate(28 120 96)"/><ellipse cx="118" cy="98" rx="355" ry="250" transform="rotate(30 118 98)" stroke-dasharray="3 2"/><ellipse cx="160" cy="70" rx="420" ry="300" transform="rotate(32 160 70)"/><ellipse cx="70" cy="150" rx="175" ry="98.00000000000001" transform="rotate(30 70 150)"/><ellipse cx="70" cy="150" rx="192" ry="107.52000000000001" transform="rotate(30 70 150)"/><ellipse cx="70" cy="150" rx="209" ry="117.04" transform="rotate(30 70 150)" stroke-dasharray="3 2"/><ellipse cx="70" cy="150" rx="226" ry="126.56000000000002" transform="rotate(30 70 150)"/><ellipse cx="70" cy="150" rx="243" ry="136.08" transform="rotate(30 70 150)"/><ellipse cx="70" cy="150" rx="260" ry="145.60000000000002" transform="rotate(30 70 150)" stroke-dasharray="3 2"/><ellipse cx="70" cy="150" rx="277" ry="155.12" transform="rotate(30 70 150)"/></g><path d="M50.9 63 C47 74 45.3 85 49.2 98.3 C53 110 61 119 69.8 124.8 C80 133 100 142 117.8 145.4 C130 147.6 147 147.6 160 144.6 L143.5 91 L83.5 74 Z" fill="#3B3B3B"/><ellipse cx="143.5" cy="78" rx="92.9" ry="62.2" transform="rotate(12 143.5 78)" fill="#fff"/><ellipse cx="143.5" cy="78" rx="90.3" ry="59.6" transform="rotate(12 143.5 78)" fill="#70AD47"/><rect x="59.8" y="47.2" width="161.7" height="40.8" fill="none" stroke="#444" stroke-width="0.8" stroke-dasharray="1.3 1.3"/><clipPath id="gc4"><ellipse cx="143.5" cy="78" rx="90.3" ry="59.6" transform="rotate(12 143.5 78)"/></clipPath><g clip-path="url(#gc4)"><rect x="59.8" y="47.2" width="161.7" height="40.8" fill="none" stroke="#fff" stroke-width="0.9" stroke-dasharray="1.3 1.3"/></g><rect x="78" y="89.3" width="126.4" height="27.5" fill="none" stroke="#fff" stroke-width="0.8" stroke-dasharray="1.3 1.3"/></svg></div>
<div style="position:absolute;left:2059px;top:810px;width:272px;height:160px;border:1px solid #d2d2d2;"></div>
<div style="position:absolute;left:2148.00px;top:879.60px;white-space:pre;font:400 12.4px/17px 'Liberation Sans',sans-serif;color:#fff;transform:scaleX(1.0061);transform-origin:0 0;">Заголовок слайда</div>
<div style="position:absolute;left:2173.40px;top:901.10px;white-space:pre;font:700 4.6px/6px 'Liberation Sans',sans-serif;color:#fff;transform:scaleX(1.0718);transform-origin:0 0;">Подзаголовок слайда</div>
<div style="position:absolute;left:6.00px;top:1032.80px;white-space:pre;font:400 13px/17px 'Liberation Sans',sans-serif;color:#444444;transform:scaleX(0.9568);transform-origin:0 0;">Слайд 1 из 1</div>
<div style="position:absolute;left:101.40px;top:1032.80px;white-space:pre;font:400 13px/17px 'Liberation Sans',sans-serif;color:#444444;transform:scaleX(0.9826);transform-origin:0 0;">русский (Украина)</div>
<svg style="position:absolute;left:1868px;top:1031px;" width="15" height="17" viewBox="0 0 15 17"><path d="M7.5 1 L11.5 5.6 H3.5Z" fill="#666"/><path d="M1 8 H14 M1 11.3 H14 M1 14.6 H9" stroke="#666" stroke-width="1.1" fill="none"/></svg>
<div style="position:absolute;left:1888.00px;top:1032.50px;white-space:pre;font:400 13px/17px 'Liberation Sans',sans-serif;color:#444444;transform:scaleX(0.9503);transform-origin:0 0;">Заметки</div>
<div style="position:absolute;left:1957px;top:1027px;width:41.3px;height:23px;background:#c8c8c8;"></div>
<svg style="position:absolute;left:1969px;top:1033px;" width="17" height="16" viewBox="0 0 17 16"><g fill="none" stroke="#666" stroke-width="1.1"><rect x="0.6" y="0.6" width="15.8" height="14.2"/><path d="M4.3 0.6 V14.8 M4.3 10.8 H16.4"/><rect x="7" y="3.2" width="6.8" height="4.6"/></g></svg>
<svg style="position:absolute;left:2010.5px;top:1033px;" width="17" height="16" viewBox="0 0 17 16"><g fill="none" stroke="#666" stroke-width="1.1"><rect x="0.6" y="0.6" width="6" height="5"/><rect x="10" y="0.6" width="6" height="5"/><rect x="0.6" y="9.6" width="6" height="5"/><rect x="10" y="9.6" width="6" height="5"/></g></svg>
<svg style="position:absolute;left:2052px;top:1033px;" width="18" height="17" viewBox="0 0 18 17"><g fill="none" stroke="#666" stroke-width="1.1"><path d="M0.6 0.8 H8.6 V13 H0.6Z M8.6 0.8 H16.8 V13 H8.6"/><path d="M2.6 3.5 H6.6 M2.6 6 H6.6 M2.6 8.5 H6.6 M2.6 11 H6.6 M10.8 3.5 H14.8 M10.8 6 H14.8 M10.8 8.5 H14.8 M10.8 11 H14.8"/><path d="M8.6 13 V16 M7 14.6 L8.6 16.2 L10.2 14.6"/></g></svg>
<svg style="position:absolute;left:2094.5px;top:1033px;" width="18" height="17" viewBox="0 0 18 17"><g fill="none" stroke="#666" stroke-width="1.1"><path d="M0.3 0.8 H17"/><path d="M2 0.8 V9.4 H15.3 V0.8"/><path d="M8.65 9.4 V15.8 M5.3 15.8 H12"/><path d="M6.3 4.4 H11"/></g></svg>
<div style="position:absolute;left:2129.5px;top:1039.3px;width:9.8px;height:2px;background:#666;"></div>
<div style="position:absolute;left:2143.8px;top:1040.8px;width:125.6px;height:1px;background:#8a8a8a;"></div>
<div style="position:absolute;left:2206px;top:1037px;width:1px;height:8px;background:#8a8a8a;"></div>
<div style="position:absolute;left:2196.4px;top:1034px;width:5.4px;height:14px;background:#666;"></div>
<svg style="position:absolute;left:2273px;top:1035px;" width="11" height="11" viewBox="0 0 11 11"><path d="M0.3 5.3 H10 M5.15 0.5 V10.2" stroke="#666" stroke-width="1.6" fill="none"/></svg>
<div style="position:absolute;left:2295.50px;top:1033.00px;white-space:pre;font:400 13px/17px 'Liberation Sans',sans-serif;color:#444444;transform:scaleX(0.8844);transform-origin:0 0;">88%</div>
<svg style="position:absolute;left:2336px;top:1033px;" width="16" height="16" viewBox="0 0 16 16"><g fill="none" stroke="#666" stroke-width="1.1"><rect x="0.6" y="0.6" width="14.4" height="14.4"/><path d="M7.8 1.2 V5.2 M6.3 3 L7.8 1.5 L9.3 3 M7.8 14.4 V10.4 M6.3 12.6 L7.8 14.1 L9.3 12.6 M1.2 7.8 H5.2 M3 6.3 L1.5 7.8 L3 9.3 M14.4 7.8 H10.4 M12.6 6.3 L14.1 7.8 L12.6 9.3"/></g></svg>
</body></html>
